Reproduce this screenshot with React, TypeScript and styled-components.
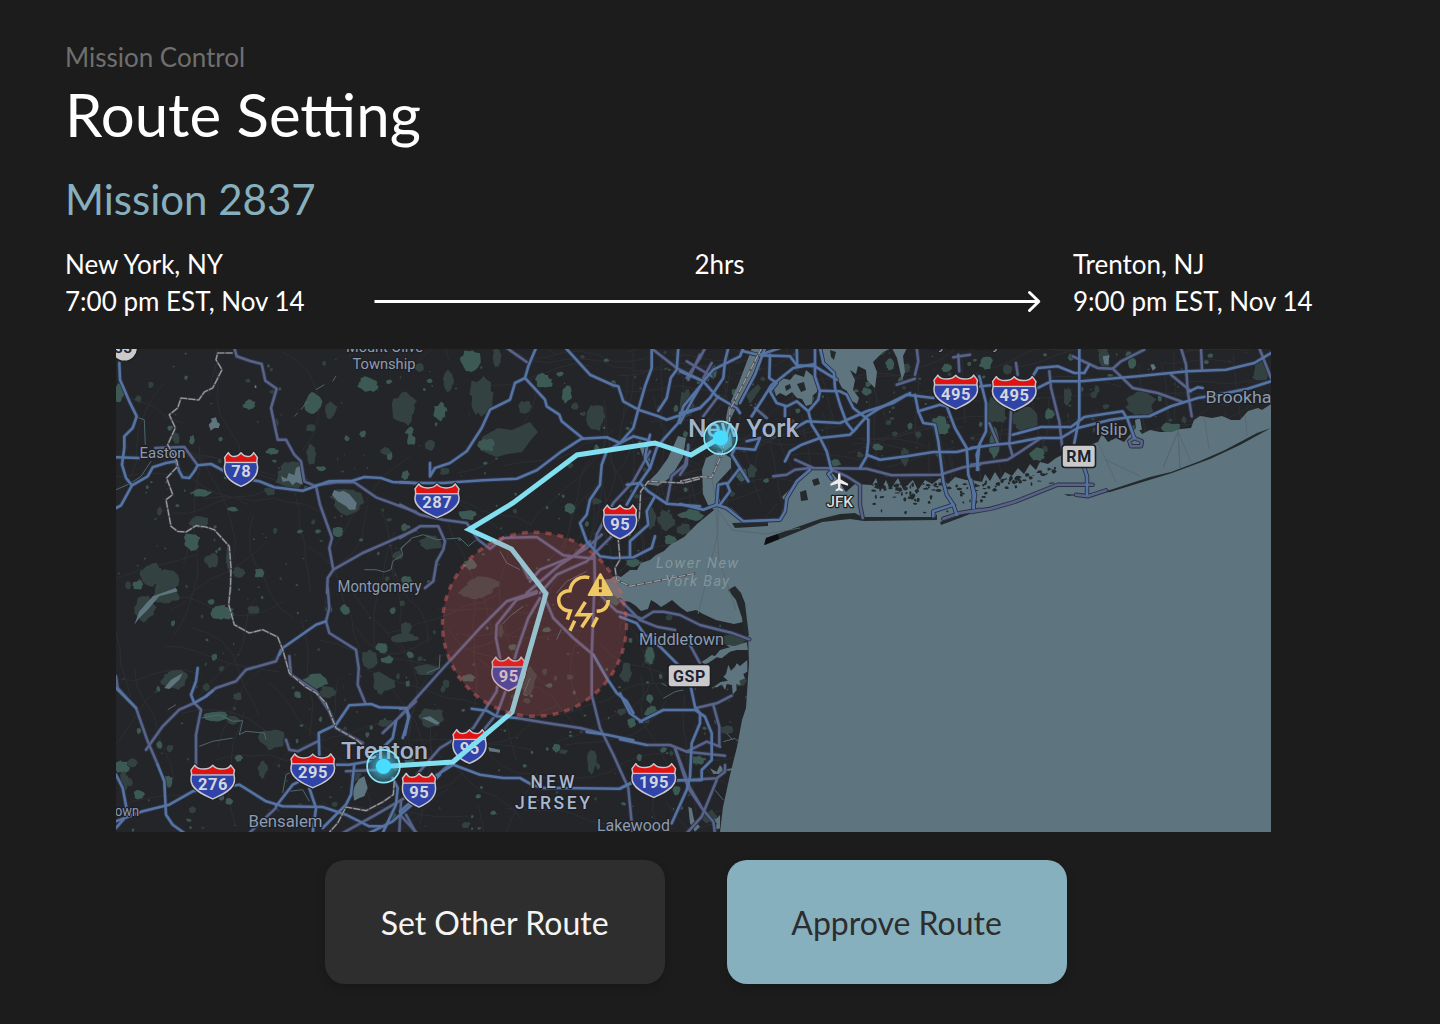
import React from "react";
import styled, { createGlobalStyle } from "styled-components";

const GlobalStyle = createGlobalStyle`
  *, *::before, *::after { box-sizing: border-box; }
  body { margin: 0; background: #1c1c1c; }
`;

const Page = styled.main`
  width: 1440px;
  height: 1024px;
  padding: 41px 0 0 65px;
  overflow: hidden;
  background: #1c1c1c;
  color: #fff;
  font-family: Lato, "Liberation Sans", sans-serif;
`;

const Breadcrumb = styled.div`
  font-size: 26px;
  line-height: 32px;
  color: #6f6f6f;
`;

const Title = styled.h1`
  margin: 5px 0 0;
  font-size: 60px;
  line-height: 72px;
  font-weight: 400;
`;

const MissionName = styled.h2`
  margin: 24px 0 0;
  font-size: 42px;
  line-height: 50px;
  font-weight: 400;
  color: #87b0bf;
`;

const Itinerary = styled.section`
  display: grid;
  grid-template-columns: 309px 667px 1fr;
  margin-top: 22px;
  font-size: 26px;
  line-height: 37px;
`;

const Stop = styled.div<{ $inset?: number }>`
  display: flex;
  flex-direction: column;
  padding-left: ${(p) => p.$inset ?? 0}px;
`;

const Leg = styled.div`
  display: flex;
  flex-direction: column;
  align-items: center;
`;

const Duration = styled.span`
  padding-left: 24px;
`;

const Arrow = styled.svg`
  display: block;
  width: 667px;
  height: 37px;
`;

const MapFrame = styled.svg`
  display: block;
  width: 1155px;
  height: 483px;
  margin: 29px 0 0 51px;
`;

const Actions = styled.div`
  display: flex;
  gap: 62px;
  margin: 28px 0 0 259.6px;
`;

const ActionButton = styled.button<{ $primary?: boolean }>`
  width: 340px;
  height: 124px;
  padding: 0;
  border: 0;
  border-radius: 20px;
  font-family: inherit;
  font-size: 32px;
  color: ${(p) => (p.$primary ? "#2d2d2d" : "#f4f4f4")};
  background: ${(p) => (p.$primary ? "#87b0bf" : "#2e2e2e")};
  box-shadow: 0 4px 8px rgba(0, 0, 0, 0.16);
`;

const Label = styled.text<{ $size: number; $tone?: string; $weight?: number; $italic?: boolean }>`
  font-family: Roboto, "Noto Sans", sans-serif;
  font-size: ${(p) => p.$size}px;
  font-weight: ${(p) => p.$weight ?? 400};
  font-style: ${(p) => (p.$italic ? "italic" : "normal")};
  fill: ${(p) => p.$tone ?? "#8c9bb0"};
  stroke: ${(p) => (p.$italic ? "none" : "#1d1f24")};
  stroke-width: 2.4px;
  stroke-linejoin: round;
  paint-order: stroke;
`;

const BadgeText = styled.text<{ $size: number; $tone: string }>`
  font-family: Roboto, "Noto Sans", sans-serif;
  font-size: ${(p) => p.$size}px;
  font-weight: 700;
  letter-spacing: 0.6px;
  text-anchor: middle;
  fill: ${(p) => p.$tone};
`;

/* Seeded generator, so that the terrain is the same on every render. */
function seeded(seed: number) {
  let s = seed;
  return () => {
    s = (s * 1664525 + 1013904223) % 4294967296;
    return s / 4294967296;
  };
}

function patch(x: number, y: number, rx: number, ry: number, rnd: () => number, n = 13) {
  const pts: string[] = [];
  let k = 0.8;
  for (let i = 0; i < n; i++) {
    const a = ((i + rnd() * 0.8) / n) * Math.PI * 2;
    k = k * 0.45 + (0.5 + rnd() * 0.65) * 0.55;
    pts.push(`${(x + Math.cos(a) * rx * k).toFixed(1)},${(y + Math.sin(a) * ry * k).toFixed(1)}`);
  }
  return pts.join(" ");
}

/* Survey sheets: geometry is stored at three units per map pixel. */
interface Sheet {
  x: number;
  y: number;
  main?: string[];
  side?: string[];
  border?: string[];
  parks?: number[][];
  water?: string[];
  creeks?: string[];
}

const sheets: Sheet[] = [
  {
    x: 116,
    y: 348,
    main: [
      "10,45 12,95 40,160 62,205 50,240 25,265 25,300 18,350 30,390 48,412",
      "0,328 70,330",
      "0,480 15,472 48,412 95,385 110,358 150,345 180,340 190,370 200,388 220,390 235,370 245,352 285,348 330,372 375,390 430,400 475,418 560,428 640,400 710,398 745,387 795,390 830,402 900,406",
    ],
    side: [
      "355,0 362,25 400,38 437,48 448,98 482,122 465,180 485,275 510,275 535,320 555,340 565,400 600,415 612,470 648,570 640,600 652,665 635,690 633,735",
      "600,412 660,403 715,403 780,448 900,492",
      "652,665 740,615 820,580 900,545",
      "118,300 205,297 245,352",
    ],
    border: [
      "350,15 305,15 300,35 318,65 290,120 265,132 248,156 195,150 185,180 160,200 178,240 155,290 183,340 185,355 152,390 170,440 150,455 165,535 185,550 210,552 240,533 270,537 295,545 340,595 345,660 343,735",
    ],
    parks: [
      [10, 130, 16, 28], [67, 152, 9, 9], [400, 170, 18, 14], [396, 98, 8, 6], [590, 165, 26, 30], [645, 185, 18, 24],
      [755, 108, 30, 20], [865, 180, 34, 44], [818, 102, 9, 7], [585, 238, 14, 12], [740, 258, 10, 10], [585, 320, 14, 30],
      [470, 310, 18, 10], [525, 385, 46, 42], [615, 362, 14, 8], [690, 455, 48, 38], [885, 275, 12, 16], [810, 310, 16, 10],
      [162, 240, 9, 8], [180, 270, 10, 18], [228, 275, 7, 14], [460, 430, 18, 12], [350, 484, 16, 8], [250, 525, 28, 18],
      [228, 580, 24, 24], [285, 638, 18, 22], [110, 680, 38, 34], [150, 705, 34, 34], [65, 712, 16, 16], [368, 676, 18, 18],
      [430, 675, 14, 14], [338, 630, 8, 40], [665, 552, 16, 14], [845, 622, 14, 14], [255, 435, 30, 10], [480, 225, 8, 14],
    ],
    water: [
      "278,230 288,220 284,212 300,208 304,222 312,228 308,240 295,240 284,248",
      "495,385 512,392 518,375 535,382 540,360 555,352 560,410 540,402 530,412 518,398 500,402",
      "648,440 655,425 668,432 682,428 700,438 722,465 718,485 700,485 690,475 665,460",
      "415,115 420,110 422,119 417,121",
    ],
    creeks: [
      "745,665 780,665 805,672 825,665 830,640 860,620 855,600 885,575",
      "535,205 545,195",
      "555,185 570,165 578,163",
      "600,125 625,110",
      "650,100 660,84",
      "0,425 40,408 75,385 105,340",
      "55,205 85,215 88,290",
    ],
  },
  {
    x: 400,
    y: 348,
    main: [
      "0,402 50,405 130,405 250,397 350,392 410,367 485,310 545,272 620,268 660,285 700,265 740,275 765,290",
      "408,0 385,55 375,90 345,105 330,155 270,185 245,240 200,310 150,345 105,360 90,385 90,345",
      "375,90 435,155 440,175 478,200 485,220 550,272",
      "497,0 570,80 640,112 655,115 670,160 715,185 775,205 800,215 845,200 900,180",
      "755,0 755,60 735,115 715,185 700,240 660,285",
      "835,0 830,65 812,90 800,150 775,188",
      "900,115 850,175 835,225 790,275 770,300 750,360 715,410 680,470",
      "750,360 735,330 740,300 750,260",
      "660,285 620,310 605,350 600,410 570,455 560,500 540,525 560,580 600,625 640,630 700,628 755,600 765,565",
      "680,410 720,405 745,430 800,467 900,475",
      "765,445 740,490 745,530 690,580 690,625",
    ],
    side: [
      "320,0 380,42",
      "0,470 60,500 130,515 200,525 235,575 270,602 310,570 410,567 490,622 580,632",
      "0,570 60,535 115,535 135,580 130,605 110,640 100,700 75,720",
      "865,300 855,350 815,385 800,465",
      "750,310 700,400 640,465 590,560 583,600 585,735",
      "380,735 480,650 560,600 605,560",
      "390,700 420,665 520,625 570,580",
      "365,650 385,690 420,700",
      "420,735 470,680 560,640 640,560",
      "760,5 830,60 900,95",
      "865,95 900,20",
    ],
    border: ["900,392 850,405 745,400 722,430 718,510 690,560 655,575 660,635 645,660 650,695 690,715 890,675"],
    parks: [
      [210, 35, 28, 30], [290, 30, 14, 34], [245, 150, 34, 60], [145, 95, 18, 30], [120, 190, 20, 26], [375, 180, 18, 20],
      [260, 290, 24, 20], [90, 293, 14, 14], [500, 140, 16, 24], [590, 210, 24, 36], [15, 382, 12, 14],
      [135, 370, 16, 12], [205, 500, 28, 14], [90, 585, 34, 24], [480, 78, 10, 8], [525, 175, 10, 10], [430, 100, 26, 20],
      [60, 60, 16, 12], [30, 250, 10, 12], [800, 520, 26, 30], [810, 575, 20, 14], [755, 510, 12, 30], [700, 645, 22, 12],
      [250, 712, 44, 24], [210, 650, 22, 16], [345, 490, 6, 8], [510, 480, 16, 14], [590, 460, 14, 10], [640, 110, 8, 12],
      [860, 170, 22, 44], [20, 700, 16, 16],
    ],
    creeks: ["0,605 35,570 70,560 110,575 180,570 205,595 235,570", "300,610 320,645 360,665", "470,735 500,700 560,670"],
  },
  {
    x: 680,
    y: 348,
    main: [
      "0,195 60,180 90,150 130,90 135,40 145,0",
      "0,70 70,100 110,145 170,180 180,195",
      "0,225 40,150 70,100 100,65 180,25 190,0",
      "255,0 225,80 180,165",
      "190,10 240,22 330,25 350,52 405,55 470,95",
      "350,0 352,55",
      "405,0 405,85 420,130 415,155 385,190 395,230 420,270 440,310 455,370 445,378 455,392",
      "420,0 430,45 462,75 465,120 480,170 500,225 520,250",
      "270,20 268,90 290,105 270,130 290,165 320,175 350,160 385,190",
      "290,100 340,60 405,48",
      "215,205 250,150 275,110 290,100",
      "420,128 480,130 500,140 520,180 565,215 565,280 560,325 540,360",
      "345,240 380,220 480,225 560,190 640,165 690,135",
      "520,250 560,205 600,180 680,140 760,150",
      "315,340 330,310 365,290 420,270 510,260 530,240",
      "560,320 600,335 680,325 760,312 830,312 900,295",
      "705,140 715,190 730,225 765,230 775,280 790,400 800,440 820,470 830,500",
      "715,190 780,170 800,175 825,240 860,300 865,380 885,440 880,480",
      "820,470 760,490 760,505",
      "390,365 350,400 320,450 315,490 300,515 190,520 140,480 110,470 70,485 0,468",
      "110,470 115,410 140,405 150,430 120,470",
      "145,405 180,360 155,320 165,300 225,305 240,270 200,280",
      "180,360 205,400",
      "315,175 315,205",
      "240,20 300,0",
      "895,365 890,320 900,290",
    ],
    side: [
      "20,90 60,30 75,0",
      "70,90 95,45",
      "20,40 95,85",
      "70,205 115,145",
      "225,180 260,210",
      "280,385 320,380 345,365 390,360",
      "345,335 400,360 560,362 635,382 780,380 850,358 900,350",
      "455,365 500,385 540,410 540,470 548,510",
      "705,80 715,40 710,0",
      "650,110 705,92",
      "838,70 835,20",
      "820,28 870,20",
      "790,512 840,495 900,485",
      "25,290 20,350 0,380",
    ],
    border: ["245,0 150,185 148,225 125,320 95,388 60,386 0,400"],
    parks: [
      [185, 385, 16, 18], [215, 370, 14, 20], [260, 398, 8, 6], [645, 258, 9, 9], [595, 298, 16, 9],
      [675, 325, 12, 26], [780, 235, 28, 28], [680, 60, 12, 14], [630, 50, 14, 16], [715, 260, 10, 10], [560, 130, 14, 12],
      [540, 320, 10, 8], [465, 345, 18, 12], [325, 500, 24, 24], [35, 500, 34, 16], [10, 545, 22, 18], [800, 60, 14, 14],
      [600, 10, 20, 10], [100, 70, 10, 20], [620, 380, 10, 7],
    ],
  },
  {
    x: 971,
    y: 348,
    main: [
      "25,85 45,165 45,250 25,290 18,365",
      "0,118 60,112",
      "0,300 70,290 125,285 205,270 270,270 320,240 420,215 480,207 535,205 600,175 680,150 740,140 830,122 900,100",
      "185,85 200,60 260,55 310,75 340,75 355,50",
      "190,125 240,100 330,100 500,85 650,70 765,65 850,45 900,15",
      "325,0 325,50 325,210 310,285",
      "125,260 210,237 300,237 340,207 455,190 470,215 490,270",
      "655,130 680,118 695,120",
      "0,395 8,440 8,480",
      "340,360 348,385 348,440",
    ],
    side: [
      "235,70 240,120 265,220 275,310",
      "490,270 513,280 510,295 480,295 475,280 490,270",
      "305,25 380,60 425,62 450,40 520,5",
      "425,62 485,120 560,135 635,162",
      "600,80 660,130",
      "630,0 645,50 650,130 662,205",
      "690,0 693,65",
      "865,0 900,90",
      "135,45 140,80",
      "120,190 115,290 125,325",
      "55,225 80,285",
      "0,350 110,335 150,310 210,270",
      "0,492 60,482 130,462 260,410 365,410",
      "315,440 350,445 405,427",
    ],
    parks: [
      [45, 45, 18, 20], [75, 185, 28, 44], [160, 215, 34, 34], [290, 145, 12, 28], [510, 165, 42, 40], [400, 30, 18, 30],
      [485, 45, 12, 14], [870, 70, 20, 32], [70, 290, 14, 44], [405, 175, 10, 8], [235, 200, 14, 16], [378, 125, 7, 12],
      [600, 240, 30, 16], [110, 65, 14, 14], [300, 30, 10, 10], [640, 215, 8, 10], [200, 320, 22, 20],
    ],
    water: ["538,50 548,48 555,60 545,68", "395,25 415,22 412,50 400,48"],
  },
  {
    x: 116,
    y: 588,
    main: [
      "630,100 600,110 500,180 490,200",
      "245,240 240,280 225,320 235,345 270,325 290,308",
      "0,300 60,360",
      "125,530 145,580 150,680 170,710 205,735",
      "0,560 20,600 35,680 0,720",
      "0,700 80,670 160,650 230,610 370,590 450,640 500,655 620,657 690,680 760,715 810,715",
      "480,655 530,590 560,575",
      "580,600 600,660 590,735",
      "610,500 608,435 660,410 700,352 765,348 790,358 870,360 880,385 860,450",
      "655,530 700,530 760,520 830,450 840,400",
      "715,530 705,620 690,650 620,720",
      "830,570 845,600 840,650 800,735",
      "900,640 830,700 760,735",
    ],
    side: [
      "635,0 640,60 630,100 640,135 720,185 728,240 725,290 748,345",
      "495,185 480,220 390,245 360,280 300,300 270,325",
      "235,345 255,365 240,440 240,535",
      "235,345 190,365 140,415 90,485",
      "0,265 5,300 60,360 95,460 125,530",
      "510,455 520,485 545,490 605,460",
      "520,205 525,260 600,310 640,370 660,420 740,465",
      "800,435 900,340",
      "680,735 780,680 900,610",
      "855,640 850,735",
      "400,735 480,660",
      "690,550 800,545",
      "870,680 900,735",
    ],
    border: [
      "343,0 338,50 355,110 400,135 440,125 485,147 500,185 520,255 570,298 600,315 630,345 660,420 720,455 745,475",
      "835,580 832,620 800,642 750,668 690,657 665,705 640,733",
    ],
    parks: [
      [150, 20, 40, 26], [90, 60, 30, 36], [315, 72, 38, 20], [415, 65, 18, 12], [685, 65, 16, 14], [175, 275, 40, 28],
      [600, 280, 40, 20], [635, 310, 24, 18], [545, 320, 10, 10], [760, 215, 24, 26], [815, 215, 18, 12], [800, 285, 34, 34],
      [800, 178, 18, 16], [865, 150, 36, 14], [300, 385, 34, 14], [350, 395, 20, 12], [470, 455, 36, 28], [365, 325, 12, 12],
      [15, 535, 24, 18], [50, 525, 14, 14], [155, 575, 16, 16], [25, 580, 18, 26], [70, 620, 16, 14], [440, 545, 14, 26],
      [370, 510, 12, 10], [810, 405, 22, 12], [130, 470, 8, 12], [230, 665, 10, 10], [340, 640, 12, 10], [720, 560, 14, 18],
      [880, 520, 14, 10],
    ],
    water: [
      "55,110 70,70 110,25 180,0 185,10 130,25 95,65 70,90",
      "145,300 165,275 200,255 190,275 160,303",
      "710,610 718,590 730,572 745,565 755,600 745,625 730,630 715,638",
    ],
    creeks: [
      "255,390 310,380 350,400 380,398 370,440 390,430 445,435 450,455",
      "250,475 290,460 350,450",
      "500,615 510,560 540,545",
      "520,610 560,605 580,640",
      "155,365 180,350",
    ],
  },
  {
    x: 400,
    y: 588,
    main: [
      "215,362 260,368 290,385 350,390",
      "580,200 620,270 650,315 680,340 700,375",
      "50,600 120,555 160,530 240,560 310,570 360,570 395,590 430,600 480,600 660,602 700,583",
      "0,362 20,360 25,390 15,440",
      "0,670 60,620 120,560",
      "560,432 620,440 700,457",
      "780,577 900,577",
    ],
    side: [
      "0,385 130,240 240,120 320,40 410,10",
      "410,15 350,35 290,110 288,150 300,210 290,310 220,420 120,480 50,560",
      "420,30 385,90 350,190 320,300 290,380",
      "350,390 440,405 540,420 600,435",
      "430,20 460,90 520,150 580,200",
      "583,0 575,200 575,320 600,420 640,500 685,600 698,735",
      "600,20 650,70 720,90",
      "0,680 50,735",
      "825,480 870,600 900,650",
      "120,555 240,440 280,390",
    ],
    parks: [
      [225, 15, 50, 22], [95, 390, 38, 28], [385, 275, 24, 40], [575, 520, 14, 34], [440, 125, 14, 8], [80, 245, 36, 14],
      [205, 270, 20, 12], [300, 130, 10, 18], [340, 178, 12, 10], [510, 268, 9, 9], [640, 30, 34, 22], [680, 255, 14, 28],
      [470, 480, 12, 12], [490, 490, 12, 8], [235, 625, 8, 7], [198, 710, 12, 9], [280, 675, 8, 6], [750, 205, 16, 26],
      [695, 405, 14, 12], [20, 120, 16, 18], [30, 200, 10, 12], [890, 520, 14, 12],
    ],
    water: ["65,390 90,385 120,405 110,410 85,398", "265,478 300,485 300,494 268,490"],
    creeks: ["120,200 118,240 80,255", "305,110 335,80 370,55", "470,155 485,120", "370,320 390,270"],
  },
  {
    x: 620,
    y: 550,
    main: [
      "0,200 50,220 75,255 120,290 160,330 205,375 225,470 240,490 240,520 215,580 210,680 200,720 155,820",
      "60,515 130,480 225,480 255,500 275,550 275,630 245,660 245,690",
      "0,430 30,490 65,515",
      "0,568 80,585",
      "0,715 40,695 200,690",
    ],
    side: [
      "0,150 60,210 100,185 130,185 180,195 240,225 300,240 340,250 388,268",
      "60,210 110,230 165,240",
      "210,285 240,340",
      "225,475 290,460 335,437",
      "280,465 298,530 298,585",
      "80,585 150,585 200,605 315,617",
      "200,605 260,575 300,590",
      "165,595 205,715 250,780 280,815 285,850",
      "200,690 290,685 315,665 315,645",
      "290,690 245,800 200,850",
    ],
    parks: [
      [90, 315, 14, 26], [15, 375, 18, 22], [95, 485, 20, 18], [5, 485, 14, 10], [235, 630, 22, 12], [320, 540, 22, 12],
      [130, 600, 10, 8], [340, 270, 44, 18], [90, 445, 10, 14], [350, 390, 30, 26], [170, 720, 10, 12], [270, 800, 20, 20],
    ],
    water: [
      "245,335 262,325 275,315 285,318 300,300 330,292 318,284 345,288 380,276 384,300 350,300 330,305 305,325 290,322 275,332 255,345",
      "310,380 318,372 325,345 333,362 345,350 350,340 360,348 382,330 382,365 370,372 375,385 358,392 362,405 348,402 350,420 338,434 336,405 320,402 315,420 305,402 292,412 280,412 302,396 325,392",
      "270,655 290,665 300,645 308,655 300,672 280,672",
      "205,770 215,775 222,810 240,830 225,845 210,820",
      "300,660 338,655 338,660 305,666",
      "275,805 288,808 300,795 300,835 285,840 290,820",
    ],
    creeks: ["130,445 165,425 190,420", "310,575 345,565 358,578", "320,550 338,570", "125,400 140,408", "285,720 310,750"],
  },
];

const pagePoints = (s: Sheet, pts: string) =>
  pts
    .split(" ")
    .map((p) => {
      const [a, b] = p.split(",").map(Number);
      return `${(s.x + a / 3).toFixed(1)},${(s.y + b / 3).toFixed(1)}`;
    })
    .join(" ");

const collect = (key: "main" | "side" | "border" | "water" | "creeks") =>
  sheets.flatMap((s) => (s[key] ?? []).map((l) => pagePoints(s, l)));

const mainRoads = collect("main");
const sideRoads = collect("side");
const borders = collect("border");
const lakes = collect("water");
const creeks = collect("creeks");

const parkRnd = seeded(41);
const parks = sheets.flatMap((s) =>
  (s.parks ?? []).map(([x, y, rx, ry], i) => ({
    pts: patch(s.x + x / 3, s.y + y / 3, (rx * 1.2) / 3, (ry * 1.2) / 3, parkRnd, 21),
    tone: i % 2 || rx * ry > 900 ? "#334240" : "#3c5a53",
  })),
);

/* Reservations with a recognisable outline. */
const namedParks = [
  "482,437 498,428 512,430 530,422 538,432 530,441 522,452 508,454 496,457 480,450",
  "746,395 758,384 761,388 750,404",
  "592,418 600,405 604,412 598,430 590,428",
  "1017,412 1027,408 1035,420 1022,432 1016,428",
];

const scatterRnd = seeded(907);
const scatter = Array.from({ length: 520 }, (_, i) => {
  const east = i % 4 === 0;
  const x = east ? 750 + scatterRnd() * 520 : 116 + scatterRnd() * 630;
  const y = east ? 350 + scatterRnd() * 110 : 350 + scatterRnd() * 482;
  const r = 0.8 + scatterRnd() * scatterRnd() * 4;
  return { pts: patch(x, y, r, r * (0.5 + scatterRnd()), scatterRnd, 8), tone: scatterRnd() > 0.45 ? "#3b5750" : "#32403e" };
});

const laneRnd = seeded(77);
const lanes = Array.from({ length: 270 }, (_, i) => {
  const city = i > 110;
  let x = city ? 590 + laneRnd() * 680 : 116 + laneRnd() * 600;
  let y = city ? 345 + laneRnd() * 170 : 349 + laneRnd() * 483;
  let a = city ? (Math.floor(laneRnd() * 2) * Math.PI) / 2 - 0.15 : laneRnd() * Math.PI * 2;
  const pts = [`${x.toFixed(1)},${y.toFixed(1)}`];
  for (let k = 0; k < 7; k++) {
    const step = city ? 10 : 17;
    a += (laneRnd() - 0.5) * (city ? 0.35 : 0.8);
    x += Math.cos(a) * step;
    y += Math.sin(a) * step;
    pts.push(`${x.toFixed(1)},${y.toFixed(1)}`);
  }
  return pts.join(" ");
});

/* Salt marsh along the south shore of Long Island. */
const marshRnd = seeded(5);
const marsh = Array.from({ length: 120 }, (_, i) => {
  const x = i < 75 ? 872 + marshRnd() * 105 : 975 + marshRnd() * 80;
  const lift = i < 75 ? 0 : (x - 975) * 0.2;
  const y = 484 - lift + marshRnd() * marshRnd() * (i < 75 ? 30 : 20);
  return patch(x, y, 0.8 + marshRnd() * 2.8, 0.6 + marshRnd() * 2.2, marshRnd, 8);
});

const ocean =
  "600,580 610,579 616,575 621,577 630,570 637,570 641,563 650,560 656,555 664,551 670,545 684,537 697,524 714,510 722,505 731,508 738,514 742,521 776,521 781,515 786,503 782,497 793,486 804,474 810,470 830,470 838,480 846,492 855,484 872,485 876,478 880,492 886,480 890,490 898,478 903,489 913,480 918,490 925,480 932,484 940,478 948,484 955,477 966,480 972,480 982,482 985,474 990,481 995,472 1000,480 1005,472 1012,476 1018,468 1024,474 1030,464 1036,470 1040,462 1048,464 1056,458 1062,455 1098,442 1102,434 1108,442 1116,438 1124,442 1132,432 1137,427 1142,434 1150,430 1160,432 1172,432 1180,429 1191,428 1194,420 1200,416 1212,418 1222,416 1231,420 1240,420 1248,411 1258,408 1262,410 1271,404 1271,832 720,832 723,807 730,775 737,747 742,720 746,708 749,663 748,635 743,622 734,624 716,620 703,614 696,610 687,612 680,607 672,600 666,604 661,607 656,603 651,600 648,609 641,611 636,606 630,602 620,600 610,592 600,590";

const inlets = [
  "752,348 764,348 762,356 742,396 730,420 728,426 726,418 728,408 738,385",
  "678,436 686,438 683,457 671,477 658,486 646,484 658,472 668,458",
  "702,470 706,458 720,451 731,458 731,468 718,482 719,498 722,506 714,510 708,505 703,494",
  "726,420 731,426 732,446 724,452 718,446",
  "822,348 823,364 835,374 842,388 847,391 850,400 857,404 859,398 853,390 855,380 850,370 856,374 858,366 866,370 867,380 875,388 877,372 873,362 883,352 892,348",
  "892,348 897,358 902,380 905,372 903,356 907,348",
  "773,386 782,378 790,380 795,374 804,377 806,370 813,376 819,382 817,392 812,396 812,404 806,406 802,399 797,398 792,392 786,396 780,393 776,396",
  "640,448 648,446 650,462 644,460",
  "1135,420 1140,418 1142,430 1136,430",
];

const isles = [
  "732,523 768,522 768,526 735,528",
  "765,545 766,538 780,533 800,526 820,519 840,514 855,513 862,517 935,517 937,514 937,520 864,521 850,519 822,522 800,531 780,539",
  "940,522 960,515 975,512 965,516 941,525",
  "1064,494 1080,495 1110,490 1150,477 1171,472 1200,461 1225,450 1257,433 1271,428 1240,445 1210,459 1172,473 1110,492 1068,496",
  "728,590 735,586 741,593 745,603 747,620 749,636 744,634 742,618 736,600",
  "826,420 832,416 834,424 828,428",
  "797,384 804,382 806,390 801,392",
  "785,386 790,384 791,388 786,391",
  "690,458 703,466 702,468 689,461",
  "688,462 700,470 698,471 687,465",
  "800,492 806,490 808,500 801,501",
  "812,480 818,478 820,484 814,486",
  "830,350 836,352 834,360 831,357",
];

const ferryLines = [
  "718,450 712,480 718,510 718,532 704,590 698,614",
  "718,510 732,530 766,534 800,528",
  "716,510 719,560 736,610",
  "1098,442 1106,460 1116,482",
  "1106,460 1140,476",
  "1178,431 1163,468 1178,431 1180,468 1178,431 1191,463",
  "1204,416 1209,448",
  "1245,415 1247,436",
];

interface ShieldProps {
  x: number;
  y: number;
  w: number;
  label: string;
}

/** Interstate marker: red crown, blue field, light outline. */
function Shield({ x, y, w, label }: ShieldProps) {
  const c = w / 2;
  const left = `C${c - 2} 3.400 ${c - 4} 4.600 ${c - c * 0.4} 4.600 C${c * 0.45} 4.600 6.400 3.600 4.800 .6`;
  const right = `C${w - 6.4} 3.600 ${w - c * 0.45} 4.600 ${w - c * 0.6} 4.600 C${c + 4} 4.600 ${c + 2} 3.400 ${c} .8`;
  const outline = `M${c} .8 ${left} L1 5.600 Q2.300 9.500 1 14 C-.2 25 ${c - 7} 31.500 ${c} 34.400 C${c + 7} 31.500 ${w + 0.2} 25 ${w - 1} 14 Q${w - 2.3} 9.500 ${w - 1} 5.600 L${w - 4.8} .6 ${right} Z`;
  const id = `crown-${x}-${y}`.replace(/\./g, "_");
  return (
    <g transform={`translate(${x} ${y})`}>
      <clipPath id={id}>
        <path d={outline} />
      </clipPath>
      <path d={outline} fill="#2f43a8" stroke="#1f2128" strokeWidth="3.4" strokeLinejoin="round" />
      <g clipPath={`url(#${id})`}>
        <rect width={w} height="35" fill="#2f43a8" />
        <rect width={w} height="10" fill="#df1412" />
        <rect y="9.8" width={w} height="1.3" fill="#c9c9cf" />
      </g>
      <path d={outline} fill="none" stroke="#c6c6ca" strokeWidth="1.5" strokeLinejoin="round" />
      <BadgeText x={c + 0.3} y={25.2} $size={16.5} $tone="#d3d6de">
        {label}
      </BadgeText>
    </g>
  );
}

function RoadPlate({ x, y, w, label }: ShieldProps) {
  return (
    <g transform={`translate(${x} ${y})`}>
      <rect width={w} height="22.5" rx="3" fill="#cacaca" stroke="#1d1f25" strokeWidth="1.6" />
      <BadgeText x={w / 2 + 0.3} y={17} $size={16} $tone="#20222f">
        {label}
      </BadgeText>
    </g>
  );
}

function Waypoint({ x, y }: { x: number; y: number }) {
  return (
    <g>
      <circle cx={x} cy={y} r="16.4" fill="url(#halo)" stroke="#8ae6f6" strokeWidth="1.7" />
      <circle cx={x} cy={y} r="7.6" fill="#48dcff" />
    </g>
  );
}

const shields: ShieldProps[] = [
  { x: 223.5, y: 452, w: 35, label: "78" },
  { x: 414, y: 483.3, w: 46, label: "287" },
  { x: 602.5, y: 504.5, w: 35, label: "95" },
  { x: 933, y: 374.5, w: 45.5, label: "495" },
  { x: 991.5, y: 376, w: 45.5, label: "495" },
  { x: 190, y: 764.5, w: 45.5, label: "276" },
  { x: 290, y: 753.3, w: 45.5, label: "295" },
  { x: 491, y: 656.5, w: 35, label: "95" },
  { x: 452, y: 729, w: 35, label: "95" },
  { x: 401.5, y: 772.7, w: 35, label: "95" },
  { x: 631, y: 763, w: 45.5, label: "195" },
];

interface Place {
  name: string;
  x: number;
  y: number;
  len: number;
  size: number;
  tone?: string;
  weight?: number;
  italic?: boolean;
  spaced?: boolean;
}

const places: Place[] = [
  { name: "Mount Olive", x: 346, y: 351.5, len: 77, size: 14.5 },
  { name: "Township", x: 352.5, y: 368.8, len: 63, size: 15 },
  { name: "Oyster Bay", x: 928, y: 349, len: 72, size: 15 },
  { name: "Easton", x: 139.5, y: 458, len: 46, size: 15.5 },
  { name: "Montgomery", x: 337.5, y: 592, len: 84, size: 16 },
  { name: "New York", x: 688, y: 437, len: 111, size: 26.5, tone: "#a3b3cc", weight: 500 },
  { name: "Trenton", x: 341, y: 759, len: 87, size: 24.5, tone: "#a3b3cc", weight: 500 },
  { name: "NEW", x: 530.5, y: 787.5, len: 44, size: 17.5, tone: "#a8b8d0", weight: 500, spaced: true },
  { name: "JERSEY", x: 515, y: 809, len: 75, size: 17.5, tone: "#a8b8d0", weight: 500, spaced: true },
  { name: "Lower New", x: 656, y: 567.5, len: 82, size: 14.5, tone: "#82959c", italic: true, spaced: true },
  { name: "York Bay", x: 665, y: 585.5, len: 64, size: 14.5, tone: "#82959c", italic: true, spaced: true },
  { name: "Middletown", x: 639, y: 645, len: 85, size: 16.5 },
  { name: "Lakewood", x: 597, y: 830.7, len: 73, size: 16.5 },
  { name: "Bensalem", x: 248.5, y: 827, len: 74, size: 16.5 },
  { name: "own", x: 115, y: 816, len: 24, size: 15 },
  { name: "Brookha", x: 1205.5, y: 403, len: 66, size: 17 },
  { name: "Islip", x: 1095.5, y: 434.5, len: 32, size: 17 },
  { name: "JFK", x: 826.5, y: 507, len: 26.5, size: 15.5, tone: "#dcdcdc", weight: 500 },
];

const routePoints = "720.5,437.5 691,455 655,443 577,455 513,503 469,529.5 511.5,549 546,593.5 512,712 453,762 383.5,766.5";

function StormIcon() {
  return (
    <g transform="translate(540 560) scale(.33333)" stroke="#f0c863" strokeWidth="10.500" fill="none">
      <path d="M148 53C120 46 94 61 90 92C63 92 50 113 59 134C65 147 77 152 91 153L82 179" />
      <path d="M205 120C204 141 192 153 170 154" />
      <path d="M136 126L112 164H150L125 202" />
      <path d="M104 182L90 212" />
      <path d="M172 172L157 201" />
      <path d="M181 42L146 105H216Z" fill="#f0c863" strokeWidth="6" strokeLinejoin="round" />
      <path d="M181 58V82M181 88V97" stroke="#5b3c36" strokeWidth="8.5" />
    </g>
  );
}

function RouteMap() {
  return (
    <MapFrame viewBox="116 349 1155 483" role="img" aria-label="Route from New York to Trenton">
      <defs>
        <radialGradient id="halo">
          <stop offset="0.3" stopColor="#48dcff" stopOpacity="0.7" />
          <stop offset="1" stopColor="#48c8e6" stopOpacity="0.22" />
        </radialGradient>
      </defs>
      <rect x="116" y="349" width="1155" height="483" fill="#242529" />
      <g fill="none" stroke="#2d2e32" strokeWidth="1">
        {lanes.map((p, i) => (
          <polyline key={i} points={p} />
        ))}
      </g>
      {scatter.map((p, i) => (
        <polygon key={i} points={p.pts} fill={p.tone} />
      ))}
      {namedParks.map((p, i) => (
        <polygon key={i} points={p} fill="#334240" />
      ))}
      {parks.map((p, i) => (
        <polygon key={i} points={p.pts} fill={p.tone} />
      ))}
      <g fill="#5e757f">
        <polygon points={ocean} />
        {[...inlets, ...lakes].map((p, i) => (
          <polygon key={i} points={p} />
        ))}
      </g>
      <g fill="none" stroke="#4d676c" strokeWidth="1">
        {creeks.map((p, i) => (
          <polyline key={i} points={p} />
        ))}
      </g>
      <g fill="#242a2b">
        {[...marsh, ...isles].map((p, i) => (
          <polygon key={i} points={p} />
        ))}
      </g>
      <polygon points="764,545 766,538 778,534 779,539" fill="#0d0f10" />
      <g fill="none" stroke="#57666f" strokeWidth=".9">
        {ferryLines.map((p, i) => (
          <polyline key={i} points={p} />
        ))}
      </g>
      <g fill="none" strokeLinejoin="round" strokeLinecap="round">
        <g stroke="#2b3348" strokeWidth="4.4">
          {[...sideRoads, ...mainRoads].map((p, i) => (
            <polyline key={i} points={p} />
          ))}
        </g>
        <g stroke="#596386" strokeWidth="2.5">
          {sideRoads.map((p, i) => (
            <polyline key={i} points={p} />
          ))}
        </g>
        <g stroke="#5674a1" strokeWidth="2.6">
          {mainRoads.map((p, i) => (
            <polyline key={i} points={p} />
          ))}
        </g>
      </g>
      <g fill="none" strokeLinejoin="round">
        {borders.map((p, i) => (
          <React.Fragment key={i}>
            <polyline points={p} stroke="#4a4c53" strokeWidth="2.2" />
            <polyline points={p} stroke="#9b9ca3" strokeWidth="1.2" strokeDasharray="7 1.5" />
          </React.Fragment>
        ))}
      </g>
      {places.map((p) => (
        <Label
          key={p.name}
          x={p.x}
          y={p.y}
          textLength={p.len}
          lengthAdjust={p.spaced ? "spacing" : "spacingAndGlyphs"}
          $size={p.size}
          $tone={p.tone}
          $weight={p.weight}
          $italic={p.italic}
        >
          {p.name}
        </Label>
      ))}
      <path
        d="M839.2 473.3c1 0 1.3 1.6 1.3 3v3l7.6 4.4v2l-7.6-2.3-.3 4.6 2.6 1.8v1.4l-3.6-1-3.6 1v-1.4l2.6-1.8-.3-4.6-7.4 2.3v-2l7.4-4.4v-3c0-1.4.3-3 1.3-3Z"
        fill="#ededed"
      />
      <circle cx="124.3" cy="348" r="13.3" fill="#cacaca" stroke="#1d1f25" strokeWidth="1.4" />
      <BadgeText x="123.5" y="353" $size={15} $tone="#20222f">
        33
      </BadgeText>
      {shields.map((s, i) => (
        <Shield key={i} {...s} />
      ))}
      <RoadPlate x={1062} y={445} w={33.5} label="RM" />
      <RoadPlate x={668} y={664.5} w={42.5} label="GSP" />
      <polyline points={routePoints} fill="none" stroke="#82dff0" strokeWidth="5" strokeLinejoin="miter" />
      <circle
        cx="534.5"
        cy="624.3"
        r="92"
        fill="rgba(222,92,86,.22)"
        stroke="rgba(206,94,96,.5)"
        strokeWidth="3.4"
        strokeDasharray="6 6"
      />
      <Waypoint x={720.5} y={437.8} />
      <Waypoint x={383.5} y={766.3} />
      <StormIcon />
    </MapFrame>
  );
}

export default function App() {
  return (
    <>
      <GlobalStyle />
      <Page>
        <Breadcrumb>Mission Control</Breadcrumb>
        <Title>Route Setting</Title>
        <MissionName>Mission 2837</MissionName>
        <Itinerary>
          <Stop>
            <span>New York, NY</span>
            <span>7:00 pm EST, Nov 14</span>
          </Stop>
          <Leg>
            <Duration>2hrs</Duration>
            <Arrow viewBox="0 0 667 37" fill="none" stroke="#fff" strokeWidth="3">
              <path d="M0.5 18.5H664.500" />
              <path d="M655.500 9.500L664.800 18.500L655.500 27.500" strokeLinecap="round" strokeLinejoin="round" />
            </Arrow>
          </Leg>
          <Stop $inset={32}>
            <span>Trenton, NJ</span>
            <span>9:00 pm EST, Nov 14</span>
          </Stop>
        </Itinerary>
        <RouteMap />
        <Actions>
          <ActionButton>Set Other Route</ActionButton>
          <ActionButton $primary>Approve Route</ActionButton>
        </Actions>
      </Page>
    </>
  );
}
